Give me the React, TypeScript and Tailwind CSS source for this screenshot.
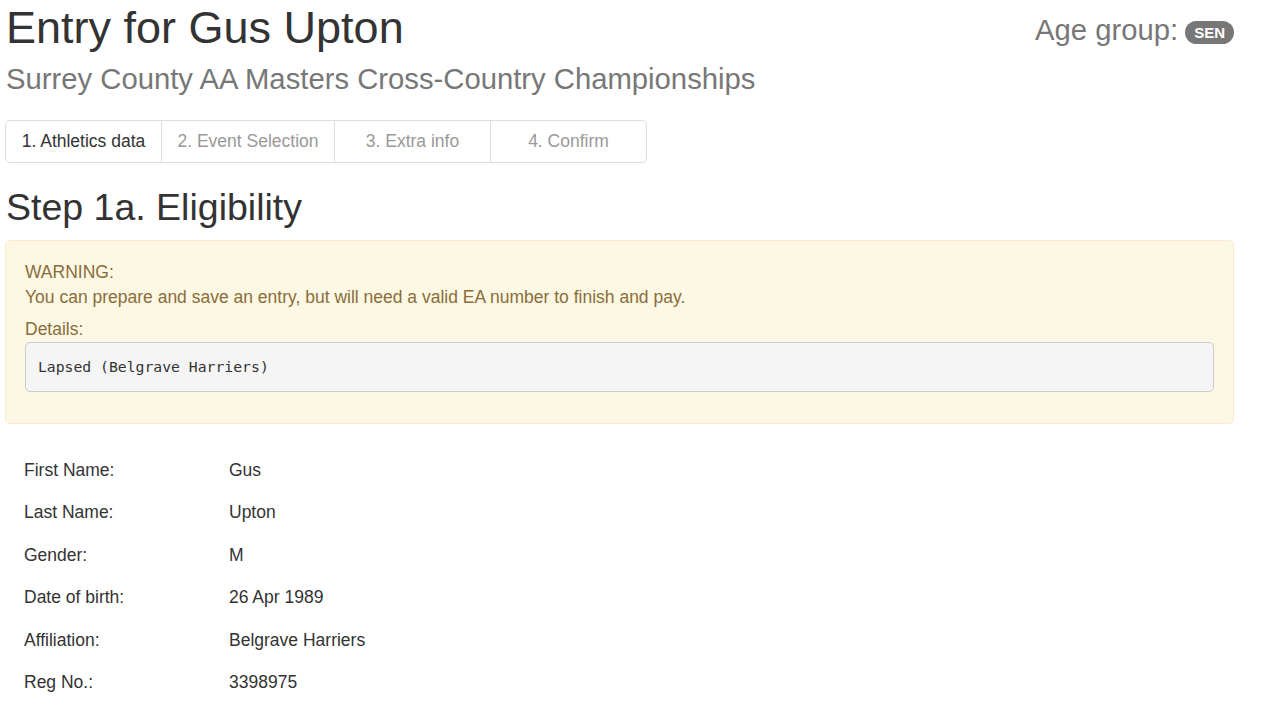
const steps = [
  { label: '1. Athletics data', width: 'w-[155px]', active: true },
  { label: '2. Event Selection', width: 'w-[173px]', active: false },
  { label: '3. Extra info', width: 'w-[156px]', active: false },
  { label: '4. Confirm', width: 'w-[156px]', active: false },
];

const details = [
  { label: 'First Name:', value: 'Gus' },
  { label: 'Last Name:', value: 'Upton' },
  { label: 'Gender:', value: 'M' },
  { label: 'Date of birth:', value: '26 Apr 1989' },
  { label: 'Affiliation:', value: 'Belgrave Harriers' },
  { label: 'Reg No.:', value: '3398975' },
];

export default function App() {
  return (
    <div className="min-h-screen bg-white font-['Liberation_Sans',Arial,sans-serif] text-[17.5px] leading-[25px] text-[#333]">
      <div className="ml-[5px] w-[1229px]">
        {/* Header */}
        <div className="flex items-start justify-between">
          <div>
            <h1 className="pt-[3px] pl-px text-[45px] leading-[49.5px] text-[#333]">Entry for Gus Upton</h1>
            <div className="mt-[10px] pl-px text-[29.25px] leading-[32px] text-[#777]">
              Surrey County AA Masters Cross-Country Championships
            </div>
          </div>
          <div className="mt-[14px] flex items-center text-[29.25px] leading-[32px] text-[#777]">
            <span>Age group:</span>
            <span className="ml-[7px] mt-[5px] inline-block rounded-full bg-[#777] px-[9px] py-[4px] text-[15px] font-bold leading-[15px] text-white">
              SEN
            </span>
          </div>
        </div>

        {/* Step tabs */}
        <div className="mt-[25px] flex w-[642px] rounded-[5px] border border-[#ddd]">
          {steps.map((s, i) => (
            <div
              key={s.label}
              className={`${s.width} ${i > 0 ? 'border-l border-[#ddd]' : ''} ${s.active ? 'text-[#333]' : 'text-[#999]'} flex h-[41px] items-center justify-center`}
            >
              {s.label}
            </div>
          ))}
        </div>

        <h2 className="mt-[24px] pl-px text-[37.5px] leading-[41.25px] text-[#333]">Step 1a. Eligibility</h2>

        {/* Warning */}
        <div className="mt-[12px] rounded-[5px] border border-[#faebcc] bg-[#fcf8e3] px-[19px] pt-[18.75px] pb-[19px] text-[#8a6d3b]">
          <div>WARNING:</div>
          <div>You can prepare and save an entry, but will need a valid EA number to finish and pay.</div>
          <div className="mt-[7px]">Details:</div>
          <pre className="mb-[12.5px] rounded-[5px] border border-[#ccc] bg-[#f5f5f5] px-[11.875px] pt-[12.5px] pb-[11.25px] font-['DejaVu_Sans_Mono',monospace] text-[14.75px] leading-[24.25px] text-[#333]">
            Lapsed (Belgrave Harriers)
          </pre>
        </div>

        {/* Athlete details */}
        <div className="mt-[24.75px]">
          {details.map((d) => (
            <div key={d.label} className="flex h-[42.5px] items-center">
              <div className="w-[224px] pl-[19px]">{d.label}</div>
              <div>{d.value}</div>
            </div>
          ))}
        </div>
      </div>
    </div>
  );
}
